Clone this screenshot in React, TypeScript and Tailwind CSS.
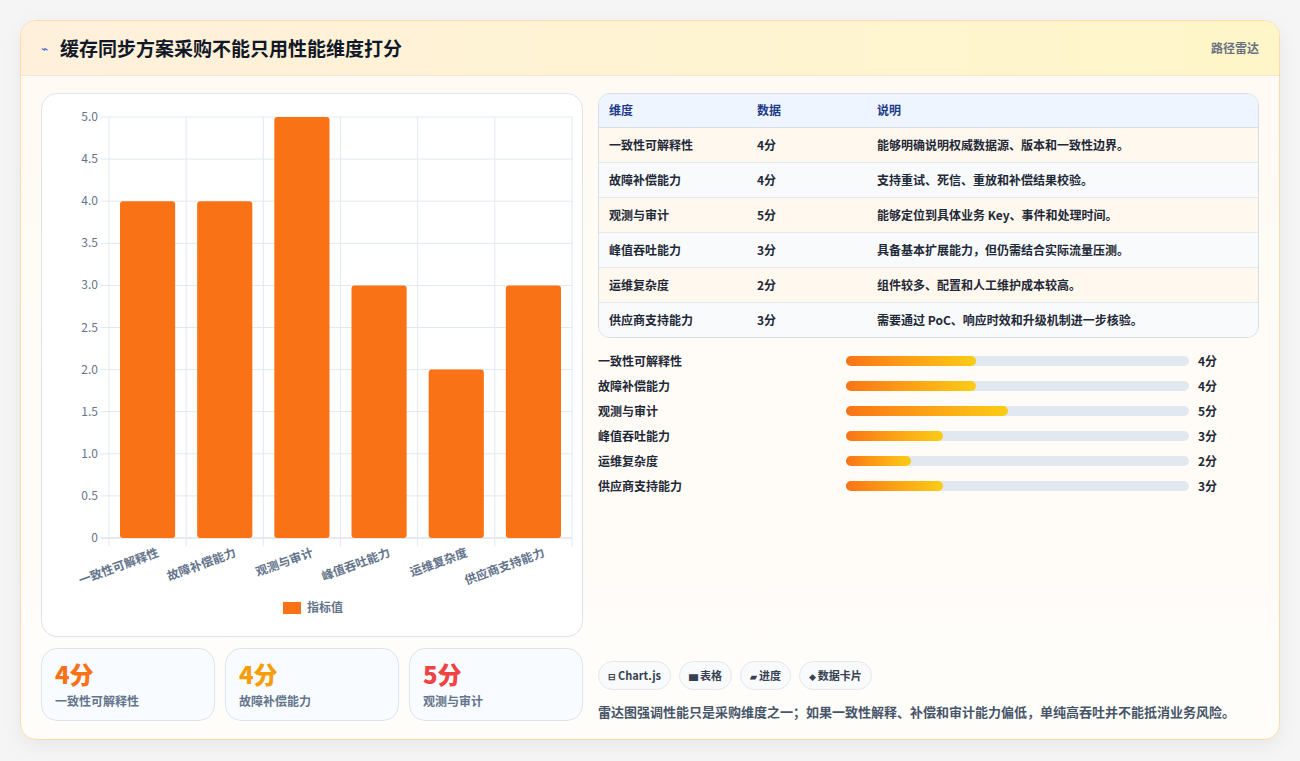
const rows = [
  { name: '一致性可解释性', v: 4, desc: '能够明确说明权威数据源、版本和一致性边界。' },
  { name: '故障补偿能力', v: 4, desc: '支持重试、死信、重放和补偿结果校验。' },
  { name: '观测与审计', v: 5, desc: '能够定位到具体业务 Key、事件和处理时间。' },
  { name: '峰值吞吐能力', v: 3, desc: '具备基本扩展能力，但仍需结合实际流量压测。' },
  { name: '运维复杂度', v: 2, desc: '组件较多、配置和人工维护成本较高。' },
  { name: '供应商支持能力', v: 3, desc: '需要通过 PoC、响应时效和升级机制进一步核验。' },
]

const font = { fontFamily: '"Noto Sans CJK SC", "Liberation Sans", sans-serif' }

function Chart() {
  const x0 = 67, x1 = 530, y0 = 444, yTop = 23
  const cw = (x1 - x0) / 6
  const ys = (v: number) => y0 - (v / 5) * (y0 - yTop)
  const ticks = Array.from({ length: 11 }, (_, i) => i * 0.5)
  return (
    <svg width="542" height="543" style={font}>
      {ticks.map((t) => (
        <g key={t}>
          <line x1={x0 - 8} x2={x1} y1={ys(t)} y2={ys(t)} stroke={t === 0 ? '#cbd5e1' : '#e2e8f0'} />
          <text x={x0 - 11} y={ys(t) + 4} textAnchor="end" fontSize="12" fill="#64748b">
            {t === 0 ? '0' : t.toFixed(1)}
          </text>
        </g>
      ))}
      {Array.from({ length: 7 }, (_, i) => (
        <line key={i} x1={x0 + i * cw} x2={x0 + i * cw} y1={yTop} y2={y0 + 8} stroke="#e2e8f0" />
      ))}
      {rows.map((r, i) => (
        <rect key={r.name} x={x0 + i * cw + 11} y={ys(r.v)} width={cw - 22} height={y0 - ys(r.v)} rx="3" fill="#f97316" />
      ))}
      {rows.map((r, i) => (
        <text
          key={r.name}
          transform={`translate(${x0 + (i + 0.5) * cw + 12},${y0 + 18}) rotate(-20)`}
          textAnchor="end"
          fontSize="12"
          fontWeight="600"
          fill="#64748b"
        >
          {r.name}
        </text>
      ))}
      <rect x="241" y="508" width="18" height="12" fill="#f97316" />
      <text x="265" y="518" fontSize="12" fill="#64748b" fontWeight="600">指标值</text>
    </svg>
  )
}

export default function App() {
  return (
    <div className="min-h-[761px] bg-[#f5f5f5] p-5" style={font}>
      <div className="h-[720px] overflow-hidden rounded-2xl border border-[#fcdcae] bg-gradient-to-b from-[#fffaf3] to-[#fffdfa] shadow-[0_6px_20px_rgba(0,0,0,0.06)]">
        <div className="flex h-[55px] items-center justify-between border-b border-[#f3e7d3] bg-gradient-to-r from-[#fff0dc] to-[#fef6c8] px-5">
          <div className="flex items-center gap-3">
            <span className="text-[12px] text-[#3b63d8]">⌁</span>
            <h1 className="text-[19px] font-bold text-[#111827]">缓存同步方案采购不能只用性能维度打分</h1>
          </div>
          <span className="text-[12px] font-semibold text-[#6b7280]">路径雷达</span>
        </div>
        <div className="flex gap-[15px] px-5 pt-[17px]">
          <div className="flex w-[542px] flex-col gap-[11px]">
            <div className="h-[544px] rounded-2xl border border-[#dbe4ef] bg-white">
              <Chart />
            </div>
            <div className="grid grid-cols-3 gap-[10px]">
              {[
                ['4分', 'text-[#f97316]', '一致性可解释性'],
                ['4分', 'text-[#f59e0b]', '故障补偿能力'],
                ['5分', 'text-[#ef4444]', '观测与审计'],
              ].map(([v, c, l]) => (
                <div key={l} className="h-[73px] rounded-2xl border border-[#dbe4ef] bg-[#f8fbff] px-[13px] pt-[9px]">
                  <div className={`text-[24px] font-extrabold leading-[32px] ${c}`}>{v}</div>
                  <div className="mt-[2px] text-[12px] font-semibold text-[#64748b]">{l}</div>
                </div>
              ))}
            </div>
          </div>
          <div className="flex w-[664px] flex-col">
            <div className="overflow-hidden rounded-xl border border-[#d5dee9]">
              <table className="w-full text-left text-[12px] text-[#1f2937]">
                <thead className="bg-[#eef5ff] text-[#1e3a8a]">
                  <tr className="h-[33px] border-b border-[#d5dee9]">
                    <th className="w-[158px] pl-[10px] font-semibold">维度</th>
                    <th className="w-[120px] font-semibold">数据</th>
                    <th className="font-semibold">说明</th>
                  </tr>
                </thead>
                <tbody>
                  {rows.map((r, i) => (
                    <tr key={r.name} className={`h-[35px] border-b border-[#e2e8f0] last:border-b-0 font-semibold ${i % 2 === 0 ? 'bg-[#fff8ee]' : 'bg-[#f8fafc]'}`}>
                      <td className="pl-[10px]">{r.name}</td>
                      <td>{r.v}分</td>
                      <td>{r.desc}</td>
                    </tr>
                  ))}
                </tbody>
              </table>
            </div>
            <div className="mt-[10px] flex flex-col">
              {rows.map((r) => (
                <div key={r.name} className="flex h-[25px] items-center text-[12px] font-semibold text-[#1f2937]">
                  <span className="w-[248px]">{r.name}</span>
                  <div className="h-[10px] w-[343px] rounded-full bg-[#e2e8f0]">
                    <div className="h-full rounded-full bg-gradient-to-r from-[#f97316] to-[#facc15]" style={{ width: r.v * 32.4 }} />
                  </div>
                  <span className="ml-[9px] font-bold">{r.v}分</span>
                </div>
              ))}
            </div>
            <div className="mt-auto flex gap-2">
              {['⊟ Chart.js', '▆ 表格', '▰ 进度', '◆ 数据卡片'].map((t) => (
                <span key={t} className="rounded-full border border-[#e5e7eb] bg-[#f8fafc] px-[9px] py-[5px] text-[11px] font-bold text-[#374151]">
                  {t.split(' ')[0] === '◆' ? <span className="text-[7px]">◆ </span> : <span className="text-[9px]">{t.split(' ')[0]} </span>}
                  {t.split(' ')[1]}
                </span>
              ))}
            </div>
            <p className="mt-[12px] text-[13px] font-semibold text-[#475569]">
              雷达图强调性能只是采购维度之一；如果一致性解释、补偿和审计能力偏低，单纯高吞吐并不能抵消业务风险。
            </p>
          </div>
        </div>
      </div>
    </div>
  )
}
